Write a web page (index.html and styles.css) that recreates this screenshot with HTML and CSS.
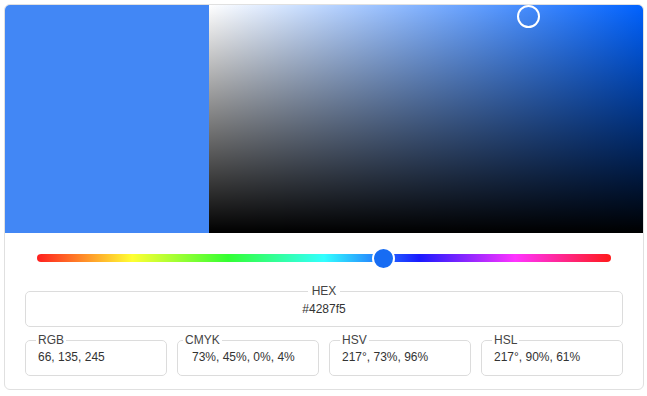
FILE: index.html
```html
<!DOCTYPE html>
<html lang="en">
<head>
    <meta charset="UTF-8">
    <meta name="viewport" content="width=device-width, initial-scale=1.0">
    <link rel="stylesheet" href="styles.css">
    <title>Color Picker</title>
</head>
<body>
    <div class="picker-card">
        <div class="picker-top">
            <div class="swatch"></div>
            <div class="sv-area">
                <span class="sv-dot"></span>
            </div>
        </div>

        <div class="controls">
            <div class="hue-bar">
                <span class="hue-thumb"></span>
            </div>

            <fieldset class="field field-hex">
                <legend>HEX</legend>
                <div class="field-value">#4287f5</div>
            </fieldset>

            <div class="field-row">
                <fieldset class="field">
                    <legend>RGB</legend>
                    <div class="field-value">66, 135, 245</div>
                </fieldset>
                <fieldset class="field field-cmyk">
                    <legend>CMYK</legend>
                    <div class="field-value">73%, 45%, 0%, 4%</div>
                </fieldset>
                <fieldset class="field">
                    <legend>HSV</legend>
                    <div class="field-value">217°, 73%, 96%</div>
                </fieldset>
                <fieldset class="field">
                    <legend>HSL</legend>
                    <div class="field-value">217°, 90%, 61%</div>
                </fieldset>
            </div>
        </div>
    </div>
</body>
</html>
```

FILE: styles.css
```css
body {
    margin: 0;
    padding: 4px;
    font-family: 'Liberation Sans', Arial, sans-serif;
    font-size: 12px;
    color: #333;
    background: #fff;
}

.picker-card {
    width: 638px;
    border: 1px solid #e0e0e0;
    border-radius: 6px;
    overflow: hidden;
}

.picker-top {
    display: flex;
    height: 228px;
}

.swatch {
    width: 204px;
    background: #4287f5;
}

.sv-area {
    flex: 1;
    position: relative;
    background: linear-gradient(to top, #000, rgba(0, 0, 0, 0)),
                linear-gradient(to right, #fff, #0062ff);
}

.sv-dot {
    position: absolute;
    left: 308px;
    top: 0;
    width: 19px;
    height: 19px;
    border: 2px solid #fff;
    border-radius: 50%;
}

.controls {
    padding: 21px 20px 13px;
}

.hue-bar {
    position: relative;
    height: 8px;
    margin: 0 12px 22px;
    border-radius: 4px;
    background: linear-gradient(90deg, #ff1f1f 0%, #ffff33 16.6%, #33ff33 33.3%, #33ffff 50%, #1a1aff 66.6%, #ff33ff 83.3%, #ff1a1a 100%);
}

.hue-thumb {
    position: absolute;
    left: 335px;
    top: -7px;
    width: 19px;
    height: 19px;
    border: 2px solid #fff;
    border-radius: 50%;
    background: #176cf3;
}

.field {
    margin: 0;
    padding: 3px 10px 11px;
    border: 1px solid #dcdcdc;
    border-radius: 5px;
    min-width: 0;
}

.field legend {
    padding: 0 2px;
    line-height: 14px;
    color: #444;
}

.field-value {
    line-height: 14px;
    padding-left: 2px;
}

.field-hex {
    padding-top: 4px;
    padding-bottom: 10px;
    text-align: center;
}

.field-hex legend {
    margin: 0 auto;
    padding: 0 4px;
}

.field-hex .field-value {
    padding-left: 0;
}

.field-cmyk legend {
    margin-left: -5px;
}

.field-cmyk .field-value {
    padding-left: 4px;
}

.field-row {
    display: grid;
    grid-template-columns: repeat(4, 1fr);
    gap: 10px;
    margin-top: 6px;
}
```
